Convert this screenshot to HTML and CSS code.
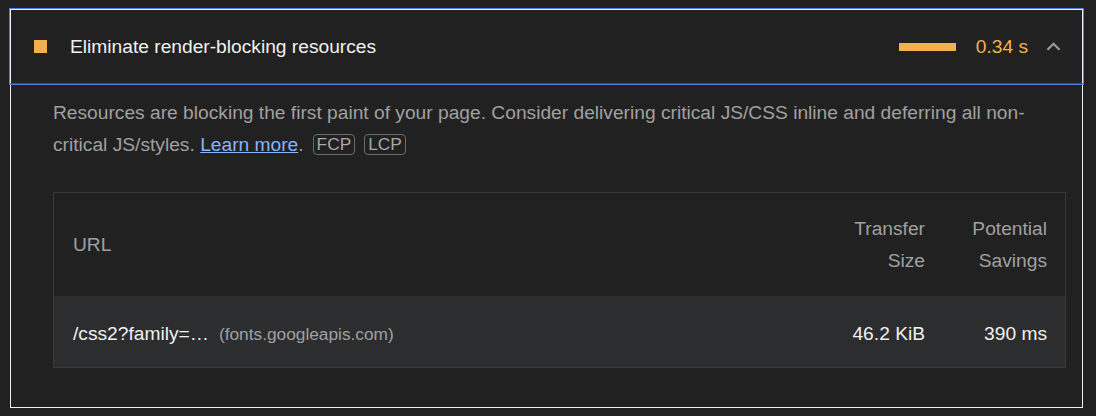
FILE: index.html
```html
<!DOCTYPE html>
<html>
<head>
<meta charset="utf-8">
<link rel="stylesheet" href="styles.css">
</head>
<body>
<div class="audit">
  <div class="summary">
    <span class="score-icon"></span>
    <span class="title">Eliminate render-blocking resources</span>
    <span class="bar"></span>
    <span class="value">0.34 s</span>
    <svg class="chevron" width="15" height="9" viewBox="0 0 15 9"><path d="M1.5 7.8 L7.5 1.8 L13.5 7.8" fill="none" stroke="#9a9a9a" stroke-width="2.2"/></svg>
  </div>
  <div class="body">
    <p class="desc">Resources are blocking the first paint of your page. Consider delivering critical JS/CSS inline and deferring all non-critical JS/styles. <a class="link" href="#">Learn more</a>.<span class="badge">FCP</span><span class="badge">LCP</span></p>
    <div class="table">
      <div class="thead">
        <div class="cell url">URL</div>
        <div class="cell num size">Transfer<br>Size</div>
        <div class="cell num savings">Potential<br>Savings</div>
      </div>
      <div class="row">
        <div class="cell url"><span class="path">/css2?family=…</span><span class="host">(fonts.googleapis.com)</span></div>
        <div class="cell num size">46.2 KiB</div>
        <div class="cell num savings">390 ms</div>
      </div>
    </div>
  </div>
</div>
</body>
</html>
```
FILE: styles.css
```css
html, body {
  margin: 0;
  padding: 0;
  background: #212121;
}
body {
  font-family: "Liberation Sans", Arial, sans-serif;
  padding: 9px 0 0 10px;
  height: 408px;
  box-sizing: border-box;
}
.audit {
  width: 1073px;
  height: 399px;
  box-sizing: border-box;
  border: 1px solid #f2f2f2;
  display: flex;
  flex-direction: column;
}
.summary {
  margin: -1px -1px 0;
  height: 75px;
  box-sizing: border-box;
  border: 1px solid #f2f2f2;
  border-bottom: 1px solid #4a4a4a;
  outline: 1px solid #4f80e1;
  display: flex;
  align-items: center;
  padding: 0 21px 0 23px;
}
.score-icon {
  width: 13px;
  height: 13px;
  background: #f5b04e;
  flex: none;
}
.title {
  margin-left: 23px;
  font-size: 19.2px;
  color: #f1f1f1;
  flex: 1;
}
.bar {
  width: 57px;
  height: 8px;
  background: #f5b04e;
  flex: none;
}
.value {
  margin-left: 20px;
  font-size: 19.2px;
  color: #f5b04e;
}
.chevron {
  margin-left: 18px;
  flex: none;
}
.body {
  padding: 0 16px 0 42px;
}
.desc {
  margin: 13px 0 0;
  font-size: 19.2px;
  line-height: 32px;
  color: #a0a0a0;
}
.link {
  color: #8ab4f8;
  text-decoration: underline;
}
.badge {
  display: inline-block;
  font-size: 17.3px;
  line-height: 19px;
  padding: 0 3px;
  border: 1px solid #6b6b6b;
  border-radius: 4px;
  color: #a8a8a8;
  margin-left: 9px;
  vertical-align: 1px;
}
.badge:first-child {
  margin-left: 5px;
}
.table {
  margin-top: 31px;
  border: 1px solid #3a3a3a;
}
.thead {
  display: flex;
  align-items: center;
  height: 103px;
  color: #a0a0a0;
  font-size: 19.2px;
  line-height: 32px;
}
.row {
  display: flex;
  align-items: center;
  height: 71px;
  padding-top: 5px;
  box-sizing: border-box;
  background: #2c2d2f;
  font-size: 19.2px;
  color: #f1f1f1;
}
.cell.url {
  flex: 1;
  padding-left: 19px;
}
.cell.num {
  text-align: right;
}
.cell.size {
  width: 120px;
}
.cell.savings {
  width: 122px;
  padding-right: 18px;
}
.host {
  margin-left: 10px;
  font-size: 17.3px;
  color: #a0a0a0;
}
```
